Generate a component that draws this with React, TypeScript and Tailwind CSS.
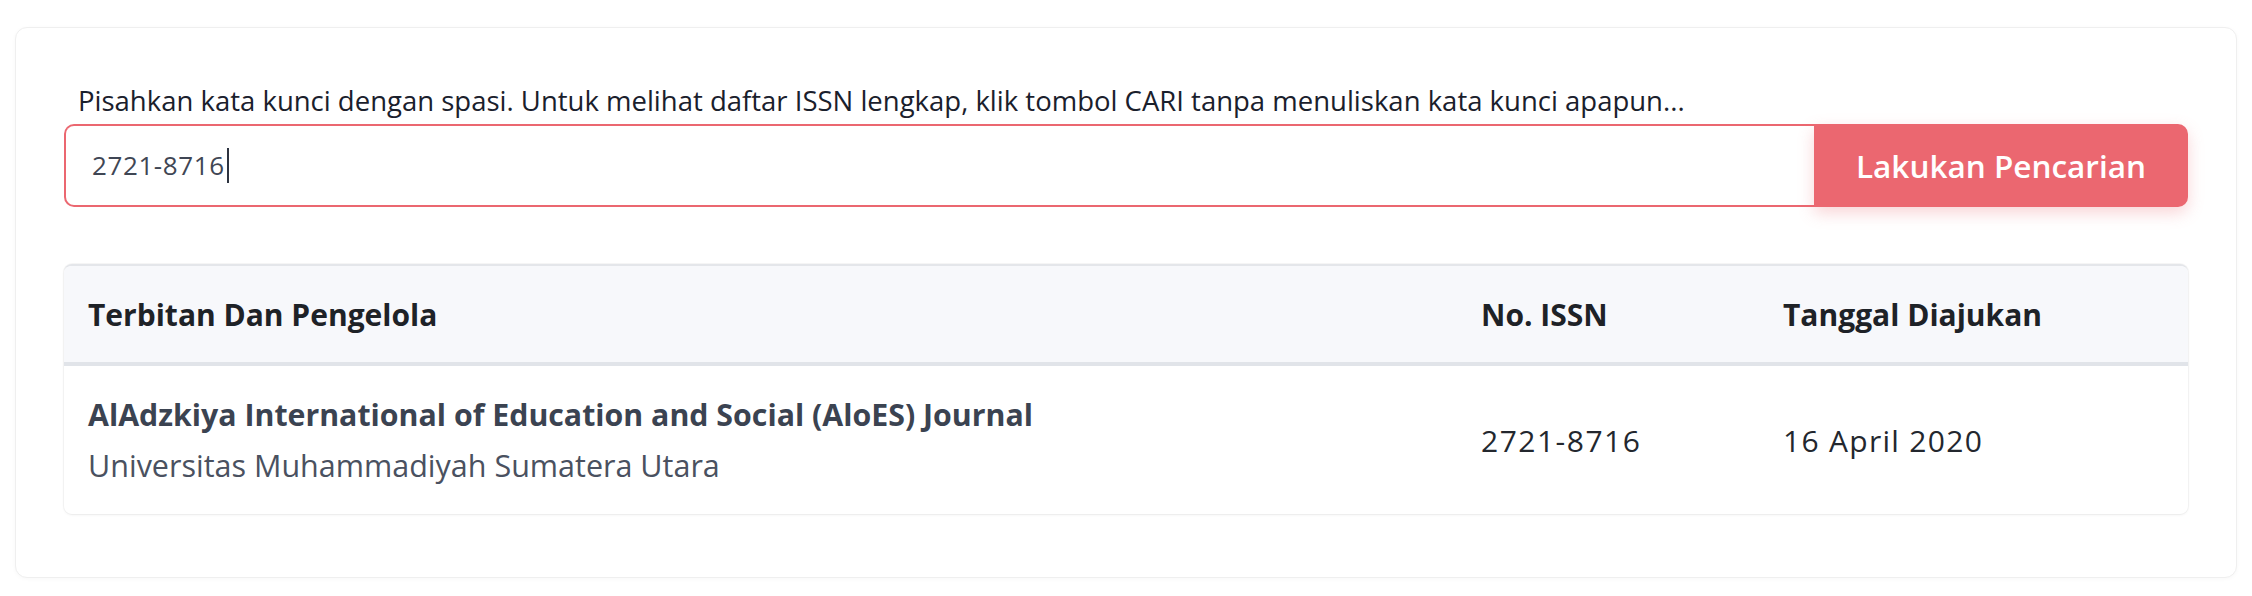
export default function App() {
  const font = { fontFamily: "'Open Sans', 'Noto Sans', sans-serif" };
  return (
    <div className="min-h-screen bg-white px-[15px] pt-[27px]" style={font}>
      <div className="rounded-[12px] border border-[#efefef] bg-white px-[48px] pb-[63px] pt-[53px] shadow-[0_1px_4px_rgba(0,0,0,0.03)]">
        <div className="mb-[3px] pl-[14px] text-[27.5px] leading-[40px] text-[#1a202c]">
          Pisahkan kata kunci dengan spasi. Untuk melihat daftar ISSN lengkap, klik tombol CARI tanpa menuliskan kata kunci apapun...
        </div>
        <div className="flex h-[83px]">
          <div className="flex flex-1 items-center rounded-l-[10px] border-2 border-r-0 border-[#eb6770] bg-white pl-[26px] text-[26px] tracking-[0.6px] text-[#3f4654]">
            <span>2721-8716</span>
            <span className="ml-[2px] inline-block h-[35px] w-[2px] bg-[#2d3340]" />
          </div>
          <button className="flex w-[374px] items-center justify-center rounded-r-[10px] bg-[#eb6770] text-[31.5px] font-semibold text-white shadow-[0_6px_16px_rgba(235,103,112,0.28)]">
            Lakukan Pencarian
          </button>
        </div>
        <div className="mt-[57px] overflow-hidden rounded-[8px] border-t-2 border-[#e4e6ea] bg-white shadow-[0_0_0_1px_rgba(0,0,0,0.03),0_1px_3px_rgba(0,0,0,0.06)]">
          <div className="grid h-[100px] grid-cols-[1393px_302px_1fr] items-center border-b-4 border-[#e1e4e9] bg-[#f7f8fb] text-[30px] font-bold text-[#1e2227]">
            <div className="px-[24px]">Terbitan Dan Pengelola</div>
            <div className="px-[24px]">No. ISSN</div>
            <div className="px-[24px]">Tanggal Diajukan</div>
          </div>
          <div className="grid h-[148px] grid-cols-[1393px_302px_1fr] items-center text-[30px]">
            <div className="px-[24px] leading-[50px]">
              <div className="text-[30.3px] font-bold text-[#3b4351]">AlAdzkiya International of Education and Social (AloES) Journal</div>
              <div className="text-[30.5px] text-[#4a5160]">Universitas Muhammadiyah Sumatera Utara</div>
            </div>
            <div className="px-[24px] tracking-[1.5px] text-[#23272e]">2721-8716</div>
            <div className="px-[24px] tracking-[1.3px] text-[#23272e]">16 April 2020</div>
          </div>
        </div>
      </div>
    </div>
  );
}
